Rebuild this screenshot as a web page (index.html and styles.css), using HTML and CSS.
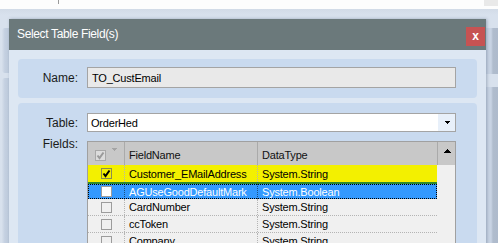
FILE: index.html
```html
<!DOCTYPE html>
<html>
<head>
<meta charset="utf-8">
<title>Select Table Field(s)</title>
<link rel="stylesheet" href="styles.css">
</head>
<body>
<div class="topbar"><span class="tick"></span><span class="corner"></span></div>
<div class="desk">
  <div class="bgwin bl1"></div>
  <div class="bgwin bl2"></div>
  <div class="bgwin br1"></div>
  <div class="bgwin br2"></div>
  <div class="dialog">
    <div class="titlebar">
      <span class="title">Select Table Field(s)</span>
      <button class="close">x</button>
    </div>
    <div class="dbody">
      <div class="panel name-panel">
        <label class="lbl">Name:</label>
        <div class="input ro">TO_CustEmail</div>
      </div>
      <div class="panel table-panel">
        <label class="lbl">Table:</label>
        <div class="input combo">
          <span class="val">OrderHed</span>
          <span class="drop"><svg width="5" height="3" viewBox="0 0 5 3"><rect x="0" y="0" width="5" height="1" fill="#000"/><rect x="1" y="1" width="3" height="1" fill="#000"/><rect x="2" y="2" width="1" height="1" fill="#000"/></svg></span>
        </div>
        <label class="lbl fields-lbl">Fields:</label>
        <div class="grid">
          <div class="ghead">
            <div class="hc hc-check">
              <span class="cb cb-dis"><svg width="9" height="9" viewBox="0 0 9 9"><path d="M1.5 4.5 L3.5 7 L7.5 1.5" fill="none" stroke="#9a9a9a" stroke-width="2"/></svg></span>
              <svg class="funnel" width="5" height="3" viewBox="0 0 5 3"><rect x="0" y="0" width="5" height="1" fill="#a4a4a4"/><rect x="1" y="1" width="3" height="1" fill="#a4a4a4"/><rect x="2" y="2" width="1" height="1" fill="#a4a4a4"/></svg>
            </div>
            <div class="hc">FieldName</div>
            <div class="hc">DataType</div>
            <div class="hc hc-scroll"><svg width="7" height="4" viewBox="0 0 7 4"><rect x="3" y="0" width="1" height="1" fill="#000"/><rect x="2" y="1" width="3" height="1" fill="#000"/><rect x="1" y="2" width="5" height="1" fill="#000"/><rect x="0" y="3" width="7" height="1" fill="#000"/></svg></div>
          </div>
          <div class="gbody">
            <div class="rows">
              <div class="row hl">
                <div class="c c-check"><span class="cb"><svg width="9" height="9" viewBox="0 0 9 9"><path d="M1.5 4.5 L3.5 7 L7.5 1.5" fill="none" stroke="#000" stroke-width="2"/></svg></span></div>
                <div class="c">Customer_EMailAddress</div>
                <div class="c">System.String</div>
              </div>
              <div class="row sel">
                <div class="c c-check"><span class="cb cb-white"></span></div>
                <div class="c">AGUseGoodDefaultMark</div>
                <div class="c">System.Boolean</div>
              </div>
              <div class="row">
                <div class="c c-check"><span class="cb"></span></div>
                <div class="c">CardNumber</div>
                <div class="c">System.String</div>
              </div>
              <div class="row">
                <div class="c c-check"><span class="cb"></span></div>
                <div class="c">ccToken</div>
                <div class="c">System.String</div>
              </div>
              <div class="row">
                <div class="c c-check"><span class="cb"></span></div>
                <div class="c">Company</div>
                <div class="c">System.String</div>
              </div>
            </div>
            <div class="track"></div>
          </div>
        </div>
      </div>
    </div>
  </div>
</div>
</body>
</html>
```
FILE: styles.css
```css
html, body {
  margin: 0;
  padding: 0;
}
body {
  width: 498px;
  height: 243px;
  overflow: hidden;
  background: #fdfdfd;
  font-family: "Liberation Sans", Arial, sans-serif;
  position: relative;
}
.topbar {
  height: 9px;
  background: #fdfdfd;
  position: relative;
}
.tick {
  position: absolute;
  left: 58px;
  top: 0;
  width: 1px;
  height: 4px;
  background: #9a9a9a;
}
.corner {
  position: absolute;
  right: 0;
  top: 0;
  width: 14px;
  height: 6px;
  background: #e9e9e9;
}
.desk {
  position: relative;
  height: 234px;
  box-sizing: border-box;
  padding: 10px 0 0 9px;
  background: linear-gradient(#d2dbe7, #d8e1ed 6px);
}
.bgwin {
  position: absolute;
  border-radius: 3px;
}
.bl1, .bl2 {
  left: 2px;
  width: 20px;
  background: linear-gradient(90deg, #d6dfeb, #c3cfe0 3px, #b9c5d6);
}
.bl1 { top: 19px; height: 45px; }
.bl2 { top: 69px; height: 200px; }
.br1, .br2 {
  left: 480px;
  width: 30px;
  background: linear-gradient(90deg, #c9d4e4, #c9d4e4 11px, #b0bccd 13px, #a9b6c8);
}
.br1 { top: 19px; height: 46px; }
.br2 { top: 78px; height: 200px; }

.dialog {
  position: relative;
  width: 477px;
  background: #dde7f3;
  box-shadow: 1px 0 3px rgba(50, 70, 100, 0.35);
}
.titlebar {
  height: 31px;
  background: #6b797b;
  display: flex;
  justify-content: space-between;
  align-items: flex-start;
  padding-left: 8px;
}
.title {
  color: #ffffff;
  font-size: 12px;
  line-height: 31px;
  letter-spacing: -0.35px;
}
.close {
  margin: 8px 1px 0 0;
  width: 19px;
  height: 19px;
  padding: 0;
  border: 0;
  background: #c65353;
  color: #ffffff;
  font-family: "Liberation Sans", Arial, sans-serif;
  font-weight: bold;
  font-size: 12px;
  line-height: 17px;
}
.dbody {
  padding: 9px;
  display: flex;
  flex-direction: column;
  gap: 5px;
}
.panel {
  background: #c9daef;
  border-radius: 4px;
  display: grid;
  grid-template-columns: 60px 369px;
  column-gap: 9px;
  align-items: center;
}
.name-panel {
  padding: 8px 0 10px;
}
.table-panel {
  padding-top: 10px;
  row-gap: 9px;
  height: 200px;
  align-content: start;
}
.lbl {
  font-size: 12px;
  text-align: right;
  color: #1a1a1a;
}
.fields-lbl {
  align-self: start;
  margin-top: -4px;
}
.input {
  box-sizing: border-box;
  height: 21px;
  border: 1px solid #a4a4a4;
  font-size: 11px;
  letter-spacing: -0.2px;
  color: #000;
  display: flex;
  align-items: center;
  padding-left: 4px;
}
.ro {
  background: #e9e9e9;
}
.combo {
  height: 19px;
  background: #ffffff;
  padding-left: 3px;
  justify-content: space-between;
}
.drop {
  width: 17px;
  height: 17px;
  background: #e8f0fa;
  display: flex;
  align-items: center;
  justify-content: center;
}
.drop svg { display: block; margin-left: 1px; }

.grid {
  border: 1px solid #a0a0a0;
  background: #f0f0f0;
  height: 120px;
  overflow: hidden;
}
.ghead {
  display: grid;
  grid-template-columns: 36px 133px 180px 18px;
  height: 23px;
  background: #c8c8c8;
}
.hc {
  border-left: 1px solid #aaaaaa;
  font-size: 11px;
  letter-spacing: -0.2px;
  color: #111;
  padding: 2px 0 0 4px;
  display: flex;
  align-items: center;
}
.hc-check {
  border-left: 0;
  padding: 4px 0 0 7px;
  gap: 6px;
}
.funnel {
  align-self: flex-start;
  margin-top: 2px;
}
.hc-scroll {
  padding: 7px 0 0 0;
  justify-content: center;
  align-items: flex-start;
}
.hc-scroll svg { display: block; margin-left: 1px; }

.cb {
  box-sizing: border-box;
  width: 11px;
  height: 11px;
  border: 1px solid #9c9c9c;
  display: flex;
  align-items: center;
  justify-content: center;
}
.cb svg { display: block; }
.cb-dis {
  background: #dcdcdc;
  border-color: #a8a8a8;
}
.cb-white {
  background: #ffffff;
}
.hl .cb {
  border-color: #8c8c50;
}

.gbody {
  display: grid;
  grid-template-columns: 349px 18px;
}
.track {
  background: #f0f0f0;
}
.row {
  box-sizing: border-box;
  display: grid;
  grid-template-columns: 36px 133px 180px;
  height: 17px;
  border-bottom: 1px dotted #b4b4b4;
  font-size: 11px;
  letter-spacing: -0.2px;
  color: #000;
}
.c {
  border-left: 1px dotted #b4b4b4;
  padding-left: 4px;
  display: flex;
  align-items: center;
  white-space: nowrap;
  overflow: hidden;
}
.c-check {
  border-left: 0;
  padding-left: 1px;
  justify-content: center;
}
.row.hl {
  background: #f3f000;
  border-bottom: 0;
}
.row.sel {
  position: relative;
  background: #3399ff;
  color: #ffffff;
  border-top: 2px solid #2f8a2a;
  border-bottom: 0;
}
.row.sel::after {
  content: "";
  position: absolute;
  left: 0;
  right: 0;
  top: 0;
  bottom: 0;
  border: 1px dotted #000;
}
.row.sel .c {
  border-left-color: #1a4f80;
}
```
